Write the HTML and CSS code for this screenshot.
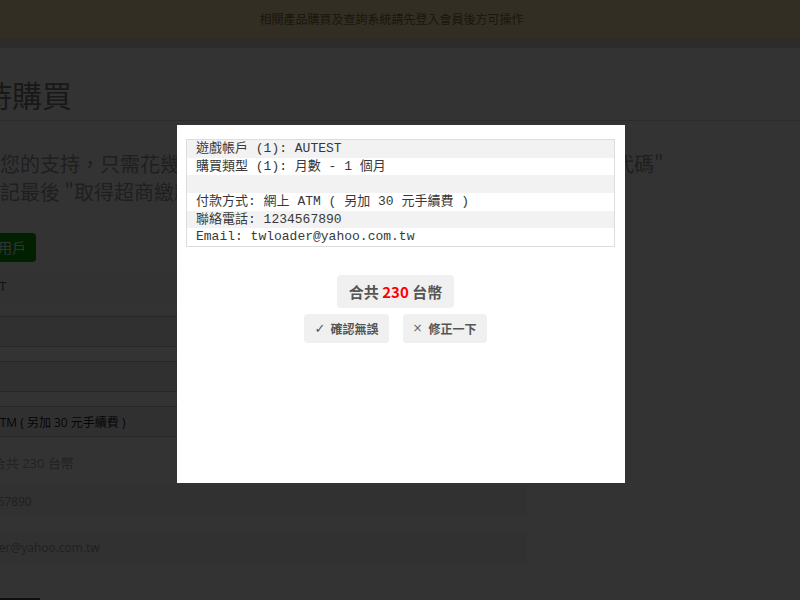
FILE: index.html
```html
<!DOCTYPE html>
<html lang="zh-Hant">
<head>
<meta charset="utf-8">
<title>線上購買</title>
<link rel="stylesheet" href="styles.css">
</head>
<body>
<div class="notice">相關產品購買及查詢系統請先登入會員後方可操作</div>
<div class="navband"></div>
<main class="page">
  <h2 class="page-title">支持購買</h2>
  <p class="lead">感謝您的支持，只需花幾分鐘填寫以下資料並確認訂單後，即可取得 "繳費代碼"<br>別忘記最後 "取得超商繳款代碼" 的步驟</p>
  <button class="btn-add" type="button">增加用戶</button>
  <form class="order-form">
    <div class="field field-text">AUTEST</div>
    <div class="field field-select"></div>
    <div class="field field-select"></div>
    <div class="field field-select">網上 ATM ( 另加 30 元手續費 )</div>
    <div class="field field-static">總額: 合共 230 台幣</div>
    <div class="field field-fill field-phone">1234567890</div>
    <div class="field field-fill field-email">twloader@yahoo.com.tw</div>
    <button class="btn-submit" type="button"></button>
  </form>
</main>
<div class="backdrop"></div>
<div class="modal">
  <div class="summary-table">
    <div class="summary-row">遊戲帳戶 (1): AUTEST</div>
    <div class="summary-row">購買類型 (1): 月數 - 1 個月</div>
    <div class="summary-row"></div>
    <div class="summary-row">付款方式: 網上 ATM ( 另加 30 元手續費 )</div>
    <div class="summary-row">聯絡電話: 1234567890</div>
    <div class="summary-row">Email: twloader@yahoo.com.tw</div>
  </div>
  <div class="summary-foot">
    <div class="total">合共 <span class="total-num">230</span> 台幣</div>
    <div class="actions">
      <button class="act" type="button"><span class="act-ic act-ok">✓</span>確認無誤</button>
      <button class="act" type="button"><span class="act-ic">×</span>修正一下</button>
    </div>
  </div>
</div>
</body>
</html>
```
FILE: styles.css
```css
* { box-sizing: border-box; }
html, body { margin: 0; height: 100%; overflow: hidden; }
body {
  background: #fff;
  color: #333;
  font-family: "Open Sans", "Noto Sans CJK TC", sans-serif;
}

.notice {
  height: 39px;
  line-height: 38px;
  border-bottom: 1px solid #e6cf8a;
  background: #fbe7ae;
  color: #8a6d3b;
  font-size: 12px;
  text-align: center;
  padding-right: 17px;
  font-family: "Noto Sans CJK TC", sans-serif;
}
.navband { height: 9px; background: #dcdcdc; }

.page { margin-left: -52px; width: 579px; }
.page-title {
  width: 852px;
  margin: 30px 0 0;
  padding: 0 0 9px 4px;
  font-size: 30px;
  line-height: 33px;
  font-weight: normal;
  color: #7a7a7a;
  border-bottom: 1px dotted #bbb;
  font-family: "Noto Sans CJK TC", sans-serif;
}
.lead {
  margin: 29px 0 0;
  padding-left: 12px;
  font-size: 20px;
  line-height: 28px;
  color: #9a9a9a;
  white-space: nowrap;
  font-family: "Noto Sans CJK TC", sans-serif;
}
.btn-add {
  display: block;
  margin: 27px 0 0 12px;
  height: 29px;
  padding: 0 10px;
  border: 0;
  border-radius: 4px;
  background: #00a000;
  color: #fff;
  font-size: 14px;
  line-height: 29px;
  font-family: "Noto Sans CJK TC", sans-serif;
}
.order-form { display: flex; flex-direction: column; gap: 14px; margin-top: 8px; }
.field { display: flex; align-items: center; padding: 0 12px; font-size: 12px; }
.field-text { height: 32px; background: #fafafa; color: #555; font-size: 13px; }
.field-select { height: 31px; padding-left: 16px; background: #f0f0f0; border: 1px solid #c6c6c6; color: #222; }
.field-static { height: 30px; margin-top: -4px; color: #aaa; font-size: 13px; }
.field-fill { height: 32px; background: #f5f5f5; color: #a0a0a0; }
.field-phone { padding-left: 15px; }
.field-email { padding-left: 13px; }
.field-static + .field-fill { margin-top: -6px; }
.btn-submit {
  align-self: flex-start;
  margin-top: 21px;
  width: 92px;
  height: 34px;
  border: 0;
  background: #4a4a4a;
}

.backdrop { position: fixed; inset: 0; background: rgba(0, 0, 0, 0.8); }
.modal {
  position: fixed;
  left: 177px;
  top: 125px;
  width: 448px;
  height: 358px;
  background: #fff;
  padding: 14px 10px 0 9px;
}
.summary-table {
  border: 1px solid #ddd;
  font-family: "Liberation Mono", "Noto Sans CJK TC", monospace;
  font-size: 13px;
  color: #383838;
}
.summary-row {
  height: 17.67px;
  line-height: 17.67px;
  padding-left: 9px;
  white-space: pre;
}
.summary-row:nth-child(odd) { background: #f2f2f2; }
.summary-foot {
  display: flex;
  flex-direction: column;
  align-items: center;
  padding-right: 10px;
}
.total {
  margin-top: 28px;
  height: 33px;
  line-height: 33px;
  padding: 0 12px;
  background: #f0f0f0;
  border-radius: 4px;
  font-size: 15px;
  font-weight: bold;
  color: #555;
  font-family: "Noto Sans CJK TC", sans-serif;
}
.total-num { color: #f00; }
.actions { display: flex; gap: 14px; margin-top: 6px; }
.act {
  display: flex;
  align-items: center;
  height: 29px;
  padding: 0 10px;
  border: 0;
  border-radius: 4px;
  background: #f0f0f0;
  color: #555;
  font: bold 12px/29px "Noto Sans CJK TC", sans-serif;
}
.act-ic {
  width: 10px;
  margin-right: 6px;
  font-size: 12px;
  font-weight: normal;
  color: #666;
  font-family: "DejaVu Sans", sans-serif;
}
.act-ok { font-size: 13px; color: #46586a; }
```
